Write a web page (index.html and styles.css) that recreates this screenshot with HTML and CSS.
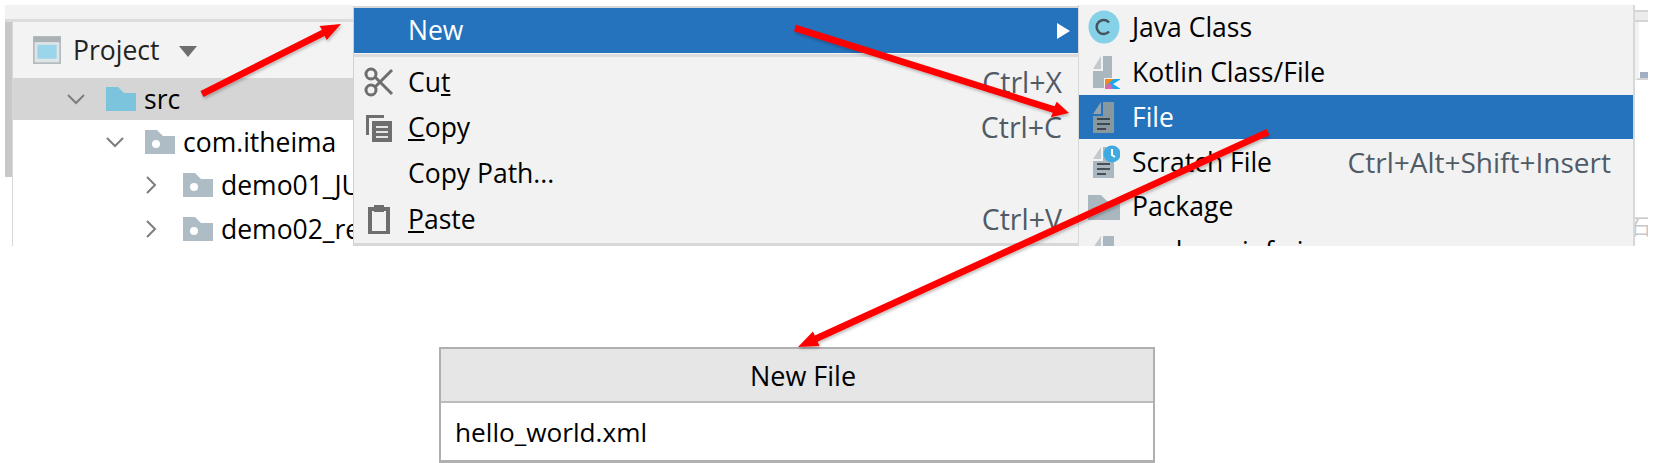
FILE: index.html
```html
<!DOCTYPE html>
<html lang="en">
<head>
<meta charset="utf-8">
<title>New File</title>
<link rel="stylesheet" href="styles.css">
</head>
<body>
<div class="page">
  <div class="ide">
    <section class="panel">
      <div class="panel-top"></div>
      <div class="panel-body">
        <div class="scroll"></div>
        <div class="panel-main">
          <header class="panel-head">
            <svg class="ico-proj" viewBox="0 0 32 32"><rect x="1" y="1" width="30" height="30" fill="#dfe4e6" stroke="#b4bcc0" stroke-width="2"/><rect x="1" y="1" width="30" height="6" fill="#aab2b6"/><rect x="5" y="10" width="22" height="16" fill="#9bd5ec"/></svg>
            <span class="panel-title">Project</span>
            <span class="caret"></span>
          </header>
          <div class="tree-row selected lvl0">
            <svg class="chev" viewBox="0 0 20 12"><path d="M2 2l8 8 8-8" fill="none" stroke="#7d7d7d" stroke-width="2"/></svg>
            <svg class="folder" viewBox="0 0 30 24"><path d="M0 0h12l6 6h12v18H0z" fill="#7cc3de"/></svg>
            <span>src</span>
          </div>
          <div class="tree-row lvl1">
            <svg class="chev" viewBox="0 0 20 12"><path d="M2 2l8 8 8-8" fill="none" stroke="#7d7d7d" stroke-width="2"/></svg>
            <svg class="folder" viewBox="0 0 30 24"><path d="M0 0h12l6 6h12v18H0z" fill="#aebcc5"/><circle cx="11" cy="14" r="4" fill="#fff"/></svg>
            <span>com.itheima</span>
          </div>
          <div class="tree-row lvl2">
            <svg class="chev-r" viewBox="0 0 12 20"><path d="M2 2l8 8-8 8" fill="none" stroke="#7d7d7d" stroke-width="2"/></svg>
            <svg class="folder" viewBox="0 0 30 24"><path d="M0 0h12l6 6h12v18H0z" fill="#aebcc5"/><circle cx="11" cy="14" r="4" fill="#fff"/></svg>
            <span>demo01_JUnit</span>
          </div>
          <div class="tree-row lvl2">
            <svg class="chev-r" viewBox="0 0 12 20"><path d="M2 2l8 8-8 8" fill="none" stroke="#7d7d7d" stroke-width="2"/></svg>
            <svg class="folder" viewBox="0 0 30 24"><path d="M0 0h12l6 6h12v18H0z" fill="#aebcc5"/><circle cx="11" cy="14" r="4" fill="#fff"/></svg>
            <span>demo02_reflect</span>
          </div>
        </div>
      </div>
    </section>

    <nav class="menu">
      <div class="menu-item active new-row">
        <span class="label">New</span>
        <span class="sub-arrow"></span>
      </div>
      <div class="menu-sep"></div>
      <div class="menu-item">
        <svg class="m-ico" viewBox="0 0 30 30"><g fill="none" stroke="#6e6e6e" stroke-width="3"><circle cx="7" cy="7" r="5"/><circle cx="7" cy="23" r="5"/><path d="M11 10l17 17M11 20L28 3"/></g></svg>
        <span class="label">Cu<u>t</u></span><span class="keys">Ctrl+X</span>
      </div>
      <div class="menu-item">
        <svg class="m-ico" viewBox="0 0 30 30"><path d="M2 2h18v3H5v17H2z" fill="#6e6e6e"/><path d="M8 8h20v21H8z" fill="#6e6e6e"/><path d="M12 13h12v2H12zM12 18h12v2H12zM12 23h12v2H12z" fill="#e4e4e4"/></svg>
        <span class="label"><u>C</u>opy</span><span class="keys">Ctrl+C</span>
      </div>
      <div class="menu-item">
        <span class="m-ico"></span>
        <span class="label">Copy Path...</span>
      </div>
      <div class="menu-item">
        <svg class="m-ico" viewBox="0 0 30 30"><path d="M6 5h18v24H6z" fill="none" stroke="#6e6e6e" stroke-width="4"/><path d="M10 1h10v7H10z" fill="#6e6e6e"/></svg>
        <span class="label"><u>P</u>aste</span><span class="keys">Ctrl+V</span>
      </div>
    </nav>

    <nav class="submenu">
      <div class="sub-item">
        <svg class="s-ico" viewBox="0 0 32 34"><ellipse cx="16" cy="17" rx="15.500" ry="16.500" fill="#85d1e8"/><path d="M21 12.500a7 7 0 1 0 0 9" fill="none" stroke="#47535a" stroke-width="2.500"/></svg>
        <span>Java Class</span>
      </div>
      <div class="sub-item">
        <svg class="s-ico" viewBox="0 0 32 34"><path d="M5 14L13 1v13z" fill="#c3c9cd"/><path d="M15 1h9v22h-8v10H5V16h10z" fill="#aab7bf"/><path d="M16 24h17v10H16z" fill="#f2f2f2"/><path d="M17 34V24h16l-8 5 8 5z" fill="#19a7ee"/><path d="M17 24h9l-9 7z" fill="#f08a1d"/><path d="M17 31l5-3 3 6h-8z" fill="#d868a8"/></svg>
        <span>Kotlin Class/File</span>
      </div>
      <div class="sub-item active">
        <svg class="s-ico" viewBox="0 0 32 34"><path d="M5 14L13 2v12z" fill="#93a3af"/><path d="M15 2h11v31H5V16h10z" fill="#87989f"/><path d="M9 18h13v2H9zM9 23h13v2H9zM9 28h9v2H9z" fill="#40484f"/></svg>
        <span>File</span>
      </div>
      <div class="sub-item">
        <svg class="s-ico" viewBox="0 0 32 34"><path d="M5 14L13 2v12z" fill="#c3c9cd"/><path d="M15 2h11v31H5V16h10z" fill="#aab7bf"/><path d="M9 18h13v2H9zM9 23h13v2H9zM9 28h9v2H9z" fill="#45505a"/><circle cx="24" cy="9" r="8.500" fill="#3fa9e0"/><path d="M24 4v6l3 2" fill="none" stroke="#fff" stroke-width="2"/></svg>
        <span>Scratch File</span>
        <span class="keys">Ctrl+Alt+Shift+Insert</span>
      </div>
      <div class="sub-item">
        <svg class="s-ico" viewBox="0 0 32 34"><path d="M0 5h13l6 6h13v19H0z" fill="#aab7bf"/></svg>
        <span>Package</span>
      </div>
      <div class="sub-item">
        <svg class="s-ico" viewBox="0 0 32 34"><path d="M5 14L13 2v12z" fill="#c3c9cd"/><path d="M15 2h11v31H5V16h10z" fill="#aab7bf"/></svg>
        <span>package-info.java</span>
      </div>
    </nav>

    <aside class="gutter">
      <div class="gutter-bar"></div>
      <div class="gutter-pane"><div class="gutter-dot"></div></div>
      <span class="gutter-glyph">石</span>
    </aside>
  </div>

  <form class="dialog">
    <div class="dialog-title">New File</div>
    <div class="dialog-input">hello_world.xml</div>
  </form>

  <svg class="arrows" viewBox="0 0 1672 463">
    <defs>
      <filter id="sh" x="-10%" y="-10%" width="120%" height="130%"><feDropShadow dx="1" dy="2" stdDeviation="1.500" flood-color="#000" flood-opacity="0.25"/></filter>
    </defs>
    <g filter="url(#sh)" fill="#ff0000">
      <path d="M200.500 91L322 29.800 319.500 25.900 341 24 326.700 40.100 324.600 36 203.500 97z"/>
      <path d="M796 24.800L1054.600 106.300 1056.700 101.700 1069 113 1050.700 117.300 1052.800 112.700 794 31.200z"/>
      <path d="M1266.600 128.900L814.800 335.600 812.900 331.400 798 347 819.500 346 817.600 341.800 1269.400 135.100z"/>
    </g>
  </svg>
</div>
</body>
</html>
```

FILE: styles.css
```css
* { box-sizing: border-box; }
html, body { margin: 0; padding: 0; background: #fff; }
body { font-family: "Open Sans", "Noto Sans", sans-serif; color: #000; overflow: hidden; }
.page { position: relative; width: 1672px; height: 463px; overflow: hidden; }
.ide { display: flex; height: 246px; padding-left: 5px; overflow: hidden; font-size: 26.500px; line-height: 1; }

.panel { width: 348px; flex: none; padding-top: 5px; }
.panel-top { height: 17px; background: #f2f2f2; border-bottom: 3px solid #dcdcdc; }
.panel-body { display: flex; height: 224px; }
.scroll { width: 7px; height: 155px; background: #c8c8c8; flex: none; }
.panel-main { flex: 1; min-width: 0; border-left: 1px solid #d8d8d8; overflow: hidden; }
.panel-head { height: 56px; background: #f3f3f3; display: flex; align-items: center; padding-left: 19px; }
.ico-proj { width: 30px; height: 28px; margin-right: 11px; }
.panel-title { color: #222; }
.caret { width: 0; height: 0; border-left: 9px solid transparent; border-right: 9px solid transparent; border-top: 11px solid #6e6e6e; margin-left: 20px; margin-top: 3px; }

.tree-row { height: 43.500px; display: flex; align-items: center; white-space: nowrap; }
.tree-row.selected { background: #d5d5d5; height: 42px; }
.tree-row .folder { width: 30px; height: 24px; flex: none; margin-right: 8px; }
.chev { width: 20px; height: 12px; flex: none; margin-right: 20px; }
.chev-r { width: 12px; height: 20px; flex: none; margin-right: 26px; }
.lvl0 { padding-left: 53px; }
.lvl1 { padding-left: 92px; }
.lvl2 { padding-left: 132px; }

.menu { width: 725px; flex: none; background: #f2f2f2; border-left: 1px solid #d0d0d0; margin-top: 6px; border-top: 2px solid #d8d8d8; border-bottom: 3px solid #d8d8d8; }
.menu-item { height: 45.700px; display: flex; align-items: center; padding: 0 16px 0 10px; white-space: nowrap; }
.menu-item .label { margin-left: 14px; }
.menu-item .keys { margin-left: auto; color: #4f5b66; font-size: 28.500px; }
.sub-item .keys { margin-left: auto; color: #4f5b66; font-size: 28px; }
.menu-item.new-row .label { margin-left: 44px; }
.active { background: #2673bd; color: #fff; }
.new-row { padding-right: 8px; height: 45px; }
.sub-arrow { margin-left: auto; width: 0; height: 0; border-top: 8px solid transparent; border-bottom: 8px solid transparent; border-left: 13px solid #fff; }
.menu-sep { height: 4px; margin-bottom: 2px; background: #dcdcdc; border-top: 1px solid #f4f4f4; }
.m-ico { width: 30px; height: 30px; flex: none; }

.submenu { width: 557px; flex: none; background: #f2f2f2; margin-top: 5px; border-left: 1px solid #d8d8d8; border-right: 2px solid #d8d8d8; overflow: hidden; }
.sub-item { height: 44.800px; display: flex; align-items: center; padding: 0 22px 0 9px; white-space: nowrap; }
.s-ico { width: 32px; height: 34px; flex: none; margin-right: 12px; }

.gutter { position: relative; width: 13px; flex: none; overflow: hidden; }
.gutter-bar { height: 12px; margin-top: 10px; border-top: 2px solid #d4d4d4; border-bottom: 2px solid #d4d4d4; background: #ececec; }
.gutter-pane { height: 58px; display: flex; justify-content: flex-end; align-items: flex-end; background: #fff; border-left: 4px solid #f2f2f2; border-bottom: 2px solid #d4d4d4; }
.gutter-dot { width: 8px; height: 6px; background: #a2aec2; }
.gutter-glyph { position: absolute; left: -6px; top: 208px; font: 22px "Noto Sans CJK SC", sans-serif; color: #c8c8c8; }

.dialog { width: 716px; margin: 101px 0 0 439px; border: 2px solid #b0b0b0; border-bottom-width: 3px; font-size: 26.200px; }
.dialog-title { height: 54px; padding-left: 12px; font-size: 27px; background: #e6e6e6; border-bottom: 2px solid #bcbcbc; display: flex; align-items: center; justify-content: center; }
.dialog-input { height: 57px; background: #fff; display: flex; align-items: center; padding-left: 14px; }

.arrows { position: absolute; left: 0; top: 0; width: 1672px; height: 463px; pointer-events: none; }
```
